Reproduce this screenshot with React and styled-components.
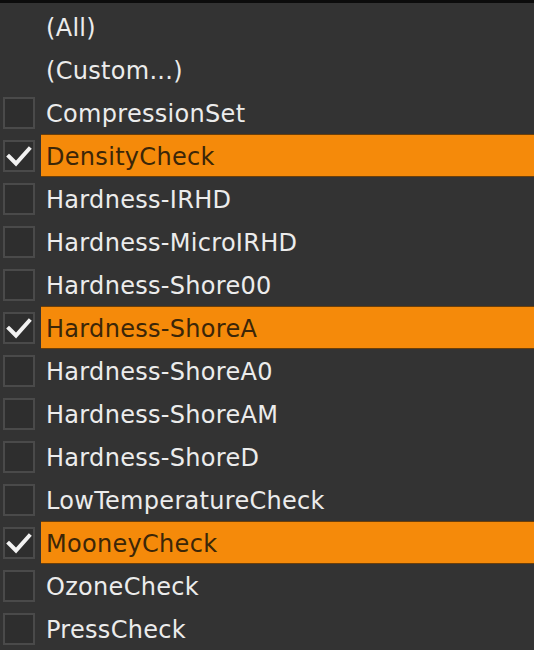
import React from 'react'
import styled, { createGlobalStyle } from 'styled-components'

const items = [
  { label: '(All)', box: false },
  { label: '(Custom...)', box: false },
  { label: 'CompressionSet', box: true },
  { label: 'DensityCheck', box: true, checked: true },
  { label: 'Hardness-IRHD', box: true },
  { label: 'Hardness-MicroIRHD', box: true },
  { label: 'Hardness-Shore00', box: true },
  { label: 'Hardness-ShoreA', box: true, checked: true },
  { label: 'Hardness-ShoreA0', box: true },
  { label: 'Hardness-ShoreAM', box: true },
  { label: 'Hardness-ShoreD', box: true },
  { label: 'LowTemperatureCheck', box: true },
  { label: 'MooneyCheck', box: true, checked: true },
  { label: 'OzoneCheck', box: true },
  { label: 'PressCheck', box: true },
]

const Global = createGlobalStyle`
  html, body {
    margin: 0;
    padding: 0;
    background: #333333;
    overflow: hidden;
  }
`

const Panel = styled.div`
  width: 534px;
  height: 650px;
  background: #333333;
  overflow: hidden;
  font-family: "DejaVu Sans", "Liberation Sans", sans-serif;
`

const TopEdge = styled.div`
  height: 3px;
  background: #0c0c0c;
  margin-bottom: 2px;
`

const List = styled.div`
  display: flex;
  flex-direction: column;
`

const Row = styled.div`
  height: 43px;
  display: flex;
  align-items: center;
`

const BoxSlot = styled.div`
  width: 41px;
  flex: none;
  display: flex;
  align-items: center;
  padding-left: 3px;
  box-sizing: border-box;
`

const Box = styled.div`
  width: 32px;
  height: 32px;
  box-sizing: border-box;
  border: 2px solid #4a4a4a;
  background: #2e2e2e;
  display: flex;
  align-items: center;
  justify-content: center;
`

const Label = styled.div`
  flex: 1;
  height: 100%;
  display: flex;
  align-items: center;
  padding-left: 5px;
  padding-top: 2px;
  box-sizing: border-box;
  font-size: 24px;
  letter-spacing: 0.3px;
  color: ${({ checked }) => (checked ? '#3b2608' : '#ececec')};
  background: ${({ checked }) => (checked ? '#f58a0a' : 'transparent')};
  border-top: 1px solid ${({ checked }) => (checked ? '#6b3f0a' : 'transparent')};
  border-bottom: 1px solid ${({ checked }) => (checked ? '#6b3f0a' : 'transparent')};
`

const Check = () => (
  <svg width="26" height="22" viewBox="0 0 26 22">
    <path d="M3 11.5 L10 18.5 L23 4" fill="none" stroke="#f2f2f2" strokeWidth="4" strokeLinecap="square" />
  </svg>
)

export default function App() {
  return (
    <Panel>
      <Global />
      <TopEdge />
      <List>
        {items.map((it) => (
          <Row key={it.label}>
            <BoxSlot>{it.box && <Box>{it.checked && <Check />}</Box>}</BoxSlot>
            <Label checked={it.checked}>{it.label}</Label>
          </Row>
        ))}
      </List>
    </Panel>
  )
}
